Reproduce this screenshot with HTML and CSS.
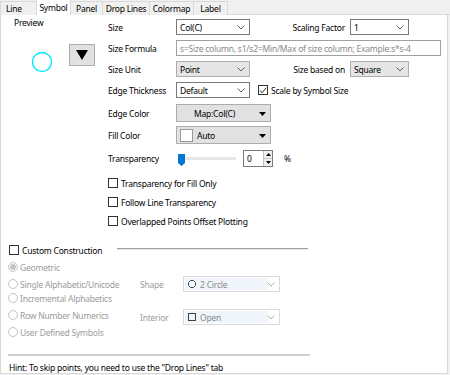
FILE: index.html
```html
<!DOCTYPE html>
<html>
<head>
<meta charset="utf-8">
<link rel="stylesheet" href="styles.css">
</head>
<body>
<div class="tabs">
  <div class="tab t-line">Line</div>
  <div class="tab active t-symbol">Symbol</div>
  <div class="tab t-panel">Panel</div>
  <div class="tab t-drop">Drop Lines</div>
  <div class="tab t-cmap">Colormap</div>
  <div class="tab t-label">Label</div>
</div>
<div class="panel">
  <div class="top">
    <div class="preview">
      <div class="preview-label">Preview</div>
      <div class="preview-body">
        <svg class="circle" width="22" height="22" viewBox="0 0 22 22"><circle cx="11" cy="11" r="9.5" fill="none" stroke="#00e8ff" stroke-width="1.4"/></svg>
        <div class="bigbtn"><svg width="12" height="10" viewBox="0 0 12 10"><polygon points="0,0 12,0 6,10" fill="#000"/></svg></div>
      </div>
    </div>
    <div class="form">
      <div class="row r1">
        <div class="lbl">Size</div>
        <div class="combo w74"><span>Col(C)</span><svg class="chev" width="8" height="5" viewBox="0 0 8 5"><polyline points="0.5,0.5 4,4 7.5,0.5" fill="none" stroke="#606060"/></svg></div>
        <div class="lbl2">Scaling Factor</div>
        <div class="combo w59"><span>1</span><svg class="chev" width="8" height="5" viewBox="0 0 8 5"><polyline points="0.5,0.5 4,4 7.5,0.5" fill="none" stroke="#606060"/></svg></div>
      </div>
      <div class="row r2">
        <div class="lbl">Size Formula</div>
        <div class="input w265"><span class="ph">s=Size column, s1/s2=Min/Max of size column; Example:s*s-4</span></div>
      </div>
      <div class="row r3">
        <div class="lbl">Size Unit</div>
        <div class="combo gray w74"><span>Point</span><svg class="chev" width="8" height="5" viewBox="0 0 8 5"><polyline points="0.5,0.5 4,4 7.5,0.5" fill="none" stroke="#606060"/></svg></div>
        <div class="lbl2">Size based on</div>
        <div class="combo gray w59"><span>Square</span><svg class="chev" width="8" height="5" viewBox="0 0 8 5"><polyline points="0.5,0.5 4,4 7.5,0.5" fill="none" stroke="#606060"/></svg></div>
      </div>
      <div class="row r4">
        <div class="lbl">Edge Thickness</div>
        <div class="combo w74"><span>Default</span><svg class="chev" width="8" height="5" viewBox="0 0 8 5"><polyline points="0.5,0.5 4,4 7.5,0.5" fill="none" stroke="#606060"/></svg></div>
        <div class="check inline"><span class="box checked"><svg width="9" height="9" viewBox="0 0 9 9"><polyline points="1,4.5 3.5,7 8,1.5" fill="none" stroke="#222" stroke-width="1.1"/></svg></span><span>Scale by Symbol Size</span></div>
      </div>
      <div class="row r5">
        <div class="lbl">Edge Color</div>
        <div class="btn w95"><span class="btn-text">Map:Col(C)</span><svg class="tri" width="7" height="4" viewBox="0 0 7 4"><polygon points="0,0 7,0 3.5,4" fill="#000"/></svg></div>
      </div>
      <div class="row r6">
        <div class="lbl">Fill Color</div>
        <div class="btn w95"><span class="swatch"></span><span class="btn-text2">Auto</span><svg class="tri" width="7" height="4" viewBox="0 0 7 4"><polygon points="0,0 7,0 3.5,4" fill="#000"/></svg></div>
      </div>
      <div class="row r7">
        <div class="lbl">Transparency</div>
        <div class="slider"><span class="thumb"><svg width="7" height="12" viewBox="0 0 7 12"><polygon points="0,0 7,0 7,9 3.5,12 0,9" fill="#0078d7"/></svg></span><span class="track"></span></div>
        <div class="spin"><span class="spin-val">0</span><span class="spin-btns"><span class="sb"><svg width="5" height="3" viewBox="0 0 5 3"><polygon points="0,3 5,3 2.5,0" fill="#000"/></svg></span><span class="sb"><svg width="5" height="3" viewBox="0 0 5 3"><polygon points="0,0 5,0 2.5,3" fill="#000"/></svg></span></span></div>
        <div class="pct">%</div>
      </div>
      <div class="check crow c1"><span class="box"></span><span>Transparency for Fill Only</span></div>
      <div class="check crow c2"><span class="box"></span><span>Follow Line Transparency</span></div>
      <div class="check crow c3"><span class="box"></span><span>Overlapped Points Offset Plotting</span></div>
    </div>
  </div>

  <div class="custom-head">
    <div class="check custom-check"><span class="box"></span><span>Custom Construction</span></div>
    <div class="etched"></div>
  </div>

  <div class="lower">
    <div class="radios">
      <div class="radio rd1"><span class="rb on"></span><span>Geometric</span></div>
      <div class="radio rd2"><span class="rb"></span><span>Single Alphabetic/Unicode</span></div>
      <div class="radio rd3"><span class="rb"></span><span>Incremental Alphabetics</span></div>
      <div class="radio rd4"><span class="rb"></span><span>Row Number Numerics</span></div>
      <div class="radio rd5"><span class="rb"></span><span>User Defined Symbols</span></div>
    </div>
    <div class="shapes">
      <div class="srow s1">
        <div class="slbl">Shape</div>
        <div class="dcombo"><span class="dinner"><svg class="oct" width="8" height="8" viewBox="0 0 8 8"><polygon points="2.5,0.5 5.5,0.5 7.5,2.5 7.5,5.5 5.5,7.5 2.5,7.5 0.5,5.5 0.5,2.5" fill="none" stroke="#444"/></svg><span>2 Circle</span></span><svg class="chev" width="8" height="5" viewBox="0 0 8 5"><polyline points="0.5,0.5 4,4 7.5,0.5" fill="none" stroke="#b0b0b0"/></svg></div>
      </div>
      <div class="srow s2">
        <div class="slbl">Interior</div>
        <div class="dcombo"><span class="dinner"><span class="sq"></span><span>Open</span></span><svg class="chev" width="8" height="5" viewBox="0 0 8 5"><polyline points="0.5,0.5 4,4 7.5,0.5" fill="none" stroke="#b0b0b0"/></svg></div>
      </div>
    </div>
  </div>

  <div class="hint-sep"></div>
  <div class="hint">Hint: To skip points, you need to use the "Drop Lines" tab</div>
</div>
</body>
</html>
```

FILE: styles.css
```css
* { box-sizing: border-box; }
html, body { margin: 0; padding: 0; }
body {
  width: 450px;
  height: 375px;
  background: #f0f0f0;
  font-family: "Noto Sans", "Open Sans", sans-serif;
  font-size: 8.5px;
  letter-spacing: -0.22px;
  color: #000;
  overflow: hidden;
}
.tabs {
  display: flex;
  height: 15px;
  border-bottom: 1px solid #d9d9d9;
  position: relative;
}
.tab {
  flex: none;
  height: 14px;
  margin-top: 1px;
  padding: 0;
  text-align: center;
  white-space: nowrap;
  line-height: 13px;
  border: 1px solid #d9d9d9;
  border-bottom: none;
  margin-right: -1px;
  background: #f0f0f0;
}
.t-line { width: 37px; text-align: left; padding-left: 5px; }
.t-symbol { width: 35px; }
.t-panel { width: 33px; }
.t-drop { width: 48px; }
.t-cmap { width: 45px; }
.t-label { width: 35px; }
.tab.active {
  background: #fff;
  height: 16px;
  margin-top: -1px;
  position: relative;
  z-index: 1;
  line-height: 16px;
}
.panel {
  width: 448px;
  height: 359px;
  background: #fff;
  border: 1px solid #d9d9d9;
  border-top: none;
}
.top { display: flex; }
.preview { width: 107px; }
.preview-label { margin: 3px 0 0 13px; line-height: 10px; }
.preview-body { display: flex; align-items: flex-start; margin-top: 16px; }
.circle { margin: 7px 0 0 30px; }
.bigbtn {
  margin-left: 16px;
  width: 26px;
  height: 22px;
  background: #e1e1e1;
  border: 1px solid #adadad;
  display: flex;
  align-items: center;
  justify-content: center;
}
.form { padding-top: 4px; }
.row { display: flex; align-items: center; }
.r1 { height: 16px; }
.r2 { height: 16px; margin-top: 5px; }
.r3 { height: 16px; margin-top: 5px; }
.r4 { height: 16px; margin-top: 5px; }
.r5 { height: 18px; margin-top: 6px; }
.r6 { height: 18px; margin-top: 4px; }
.r7 { height: 17px; margin-top: 6px; }
.lbl { width: 68px; white-space: nowrap; }
.lbl2 { width: 100px; text-align: right; padding-right: 5px; white-space: nowrap; }
.combo, .input {
  height: 16px;
  border: 1px solid #7a7a7a;
  background: #fff;
  display: flex;
  align-items: center;
  padding-left: 3px;
  position: relative;
}
.combo .chev { position: absolute; right: 4px; top: 5px; }
.combo.gray { background: #e5e5e5; border-color: #adadad; }
.w74 { width: 74px; }
.w59 { width: 59px; }
.w265 { width: 265px; }
.input { border-color: #a0a0a0; }
.ph { color: #8a8a8a; white-space: nowrap; }
.check { display: flex; align-items: center; white-space: nowrap; }
.check .box {
  width: 10px;
  height: 10px;
  border: 1px solid #333;
  background: #fff;
  margin-right: 3px;
  display: flex;
  align-items: center;
  justify-content: center;
  flex: none;
}
.inline { margin-left: 8px; }
.btn {
  height: 18px;
  background: #e1e1e1;
  border: 1px solid #adadad;
  display: flex;
  align-items: center;
  position: relative;
}
.w95 { width: 95px; }
.btn .tri { position: absolute; right: 4px; top: 7px; }
.btn-text { margin-left: 17px; }
.swatch { width: 13px; height: 13px; background: #fff; border: 1px solid #999; margin-left: 3px; }
.btn-text2 { margin-left: 4px; }
.slider { width: 60px; height: 17px; display: flex; align-items: center; padding-left: 2px; }
.thumb { display: flex; margin-top: 2px; }
.track { flex: 1; height: 3px; background: #e6e6e6; }
.spin {
  margin-left: 7px;
  width: 30px;
  height: 17px;
  border: 1px solid #7a7a7a;
  display: flex;
}
.spin-val { flex: 1; padding-left: 3px; line-height: 15px; }
.spin-btns { width: 9px; display: flex; flex-direction: column; border-left: 1px solid #c0c0c0; }
.sb { flex: 1; display: flex; align-items: center; justify-content: center; background: #f0f0f0; border-bottom: 1px solid #c8c8c8; }
.sb:last-child { border-bottom: none; }
.pct { margin-left: 11px; }
.crow { height: 12px; }
.c1 { margin-top: 10px; }
.c2 { margin-top: 7px; }
.c3 { margin-top: 7px; }
.custom-head { display: flex; align-items: center; height: 12px; margin-top: 17px; padding-left: 8px; }
.custom-check { width: 108px; }
.etched { width: 191px; height: 2px; border-top: 1px solid #a0a0a0; border-bottom: 1px solid #e6e6e6; margin-top: -3px; }
.lower { display: flex; margin-top: 4px; padding-left: 7px; }
.radios { width: 132px; color: #9b9b9b; }
.radio { display: flex; align-items: center; height: 14px; white-space: nowrap; }
.rd2 { margin-top: 3px; }
.rd3 { margin-top: 0px; }
.rd4 { margin-top: 3px; }
.rd5 { margin-top: 3px; }
.rb {
  width: 10px;
  height: 10px;
  border-radius: 50%;
  border: 1px solid #c4c4c4;
  background: #fff;
  margin-right: 2px;
  display: flex;
  align-items: center;
  justify-content: center;
  flex: none;
}
.rb.on::after { content: ""; width: 6px; height: 6px; border-radius: 50%; background: #c4c4c4; }
.shapes { color: #9b9b9b; }
.srow { display: flex; align-items: center; height: 16px; }
.s1 { margin-top: 16px; }
.s2 { margin-top: 17px; }
.slbl { width: 43px; }
.dcombo {
  width: 97px;
  height: 16px;
  border: 1px solid #dadada;
  display: flex;
  align-items: center;
  position: relative;
  padding: 1px;
}
.dinner { width: 83px; height: 12px; background: #f0f4fb; display: flex; align-items: center; padding-left: 3px; color: #8a8a8a; }
.dinner span:last-child { margin-left: 4px; }
.oct { flex: none; }
.sq { width: 8px; height: 8px; border: 1px solid #444; flex: none; }
.dcombo .chev { position: absolute; right: 4px; top: 5px; }
.hint-sep { width: 302px; height: 2px; margin: 15px 0 0 7px; background: #d0d0d0; }
.hint { margin: 6px 0 0 8px; line-height: 12px; white-space: nowrap; }
```
